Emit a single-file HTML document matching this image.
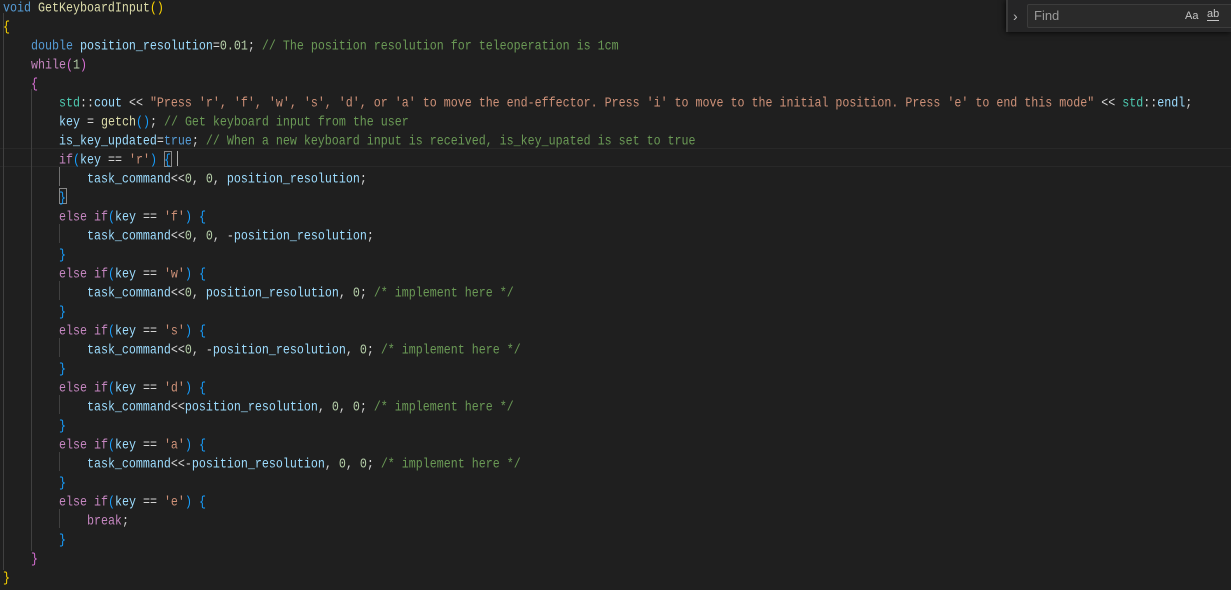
<!DOCTYPE html><html><head><meta charset="utf-8"><style>
body{margin:0;width:1231px;height:584px;background:#1f1f1f;overflow:hidden;position:relative;font-family:"Liberation Mono",monospace}
#w{position:absolute;left:0;top:2px;width:1231px;height:584px}
.l{position:absolute;left:3px;height:19px;line-height:19px;white-space:pre;font-size:11.67px;color:#d4d4d4;transform:scaleY(1.2);transform-origin:0 50%}
.k{color:#569cd6}.c{color:#c586c0}.f{color:#dcdcaa}.v{color:#9cdcfe}.n{color:#b5cea8}.s{color:#ce9178}.m{color:#6a9955}.t{color:#4ec9b0}
.y{color:#ffd700}.p{color:#da70d6}.b{color:#179fff}
.g{position:absolute;width:1px;background:#404040}
</style></head><body>
<div style="position:absolute;left:0;top:148px;width:1231px;height:17px;border-top:1px solid #282828;border-bottom:1px solid #282828"></div>
<div class="g" style="left:3px;top:13px;height:557px"></div>
<div class="g" style="left:31px;top:89px;height:462px"></div>
<div class="g" style="left:59px;top:167px;height:19px;background:#707070"></div>
<div class="g" style="left:59px;top:224px;height:19px"></div>
<div class="g" style="left:59px;top:281px;height:19px"></div>
<div class="g" style="left:59px;top:338px;height:19px"></div>
<div class="g" style="left:59px;top:395px;height:19px"></div>
<div class="g" style="left:59px;top:452px;height:19px"></div>
<div class="g" style="left:59px;top:509px;height:19px"></div>
<div style="position:absolute;left:177px;top:151px;width:1px;height:15px;background:#aeafad"></div>
<div style="position:absolute;left:164px;top:151px;width:6px;height:14px;border:1px solid #888"></div>
<div style="position:absolute;left:59px;top:188px;width:6px;height:14px;border:1px solid #888"></div>
<div id="w">
<div class="l" style="top:-3px"><span class="k">void</span> <span class="f">GetKeyboardInput</span><span class="y">()</span></div>
<div class="l" style="top:16px"><span class="y">{</span></div>
<div class="l" style="top:35px">    <span class="k">double</span> <span class="v">position_resolution</span>=<span class="n">0.01</span>; <span class="m">// The position resolution for teleoperation is 1cm</span></div>
<div class="l" style="top:54px">    <span class="c">while</span><span class="p">(</span><span class="n">1</span><span class="p">)</span></div>
<div class="l" style="top:73px">    <span class="p">{</span></div>
<div class="l" style="top:92px">        <span class="t">std</span>::<span class="v">cout</span> &lt;&lt; <span class="s">"Press 'r', 'f', 'w', 's', 'd', or 'a' to move the end-effector. Press 'i' to move to the initial position. Press 'e' to end this mode"</span> &lt;&lt; <span class="t">std</span>::<span class="v">endl</span>;</div>
<div class="l" style="top:111px">        <span class="v">key</span> = <span class="f">getch</span><span class="b">()</span>; <span class="m">// Get keyboard input from the user</span></div>
<div class="l" style="top:130px">        <span class="v">is_key_updated</span>=<span class="k">true</span>; <span class="m">// When a new keyboard input is received, is_key_upated is set to true</span></div>
<div class="l" style="top:149px">        <span class="c">if</span><span class="b">(</span><span class="v">key</span> == <span class="s">'r'</span><span class="b">)</span> <span class="b">{</span></div>
<div class="l" style="top:168px">            <span class="v">task_command</span>&lt;&lt;<span class="n">0</span>, <span class="n">0</span>, <span class="v">position_resolution</span>;</div>
<div class="l" style="top:187px">        <span class="b">}</span></div>
<div class="l" style="top:206px">        <span class="c">else</span> <span class="c">if</span><span class="b">(</span><span class="v">key</span> == <span class="s">'f'</span><span class="b">)</span> <span class="b">{</span></div>
<div class="l" style="top:225px">            <span class="v">task_command</span>&lt;&lt;<span class="n">0</span>, <span class="n">0</span>, -<span class="v">position_resolution</span>;</div>
<div class="l" style="top:244px">        <span class="b">}</span></div>
<div class="l" style="top:263px">        <span class="c">else</span> <span class="c">if</span><span class="b">(</span><span class="v">key</span> == <span class="s">'w'</span><span class="b">)</span> <span class="b">{</span></div>
<div class="l" style="top:282px">            <span class="v">task_command</span>&lt;&lt;<span class="n">0</span>, <span class="v">position_resolution</span>, <span class="n">0</span>; <span class="m">/* implement here */</span></div>
<div class="l" style="top:301px">        <span class="b">}</span></div>
<div class="l" style="top:320px">        <span class="c">else</span> <span class="c">if</span><span class="b">(</span><span class="v">key</span> == <span class="s">'s'</span><span class="b">)</span> <span class="b">{</span></div>
<div class="l" style="top:339px">            <span class="v">task_command</span>&lt;&lt;<span class="n">0</span>, -<span class="v">position_resolution</span>, <span class="n">0</span>; <span class="m">/* implement here */</span></div>
<div class="l" style="top:358px">        <span class="b">}</span></div>
<div class="l" style="top:377px">        <span class="c">else</span> <span class="c">if</span><span class="b">(</span><span class="v">key</span> == <span class="s">'d'</span><span class="b">)</span> <span class="b">{</span></div>
<div class="l" style="top:396px">            <span class="v">task_command</span>&lt;&lt;<span class="v">position_resolution</span>, <span class="n">0</span>, <span class="n">0</span>; <span class="m">/* implement here */</span></div>
<div class="l" style="top:415px">        <span class="b">}</span></div>
<div class="l" style="top:434px">        <span class="c">else</span> <span class="c">if</span><span class="b">(</span><span class="v">key</span> == <span class="s">'a'</span><span class="b">)</span> <span class="b">{</span></div>
<div class="l" style="top:453px">            <span class="v">task_command</span>&lt;&lt;-<span class="v">position_resolution</span>, <span class="n">0</span>, <span class="n">0</span>; <span class="m">/* implement here */</span></div>
<div class="l" style="top:472px">        <span class="b">}</span></div>
<div class="l" style="top:491px">        <span class="c">else</span> <span class="c">if</span><span class="b">(</span><span class="v">key</span> == <span class="s">'e'</span><span class="b">)</span> <span class="b">{</span></div>
<div class="l" style="top:510px">            <span class="c">break</span>;</div>
<div class="l" style="top:529px">        <span class="b">}</span></div>
<div class="l" style="top:548px">    <span class="p">}</span></div>
<div class="l" style="top:567px"><span class="y">}</span></div>
</div>
<div style="position:absolute;left:1006px;top:0;width:225px;height:32px;background:#252526;box-shadow:0 0 6px #000;border-left:2px solid #3a3a3a;box-sizing:border-box"></div>
<div style="position:absolute;left:1013px;top:8px;color:#bbb;font:14px 'Liberation Sans',sans-serif">›</div>
<div style="position:absolute;left:1027px;top:4px;width:210px;height:22px;background:#2a2a2a;border:1px solid #3c3c3c;border-radius:2px"></div>
<div style="position:absolute;left:1034px;top:8px;color:#9a9a9a;font:13px 'Liberation Sans',sans-serif">Find</div>
<div style="position:absolute;left:1185px;top:10px;color:#c5c5c5;font:11px 'Liberation Sans',sans-serif">Aa</div>
<div style="position:absolute;left:1207px;top:9px;color:#c5c5c5;font:11px 'Liberation Sans',sans-serif;border-bottom:1px solid #c5c5c5;line-height:11px">ab</div>
</body></html>
